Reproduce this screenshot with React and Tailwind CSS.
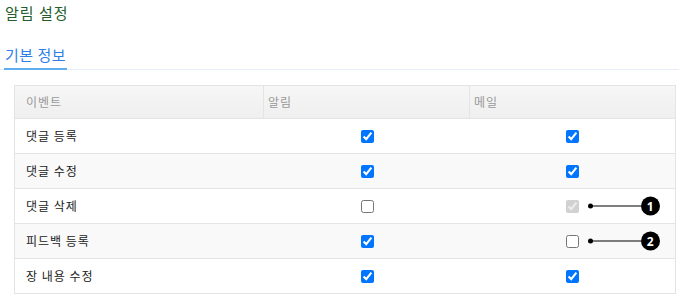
const rows = [
  { name: "댓글 등록", alarm: true, mail: true },
  { name: "댓글 수정", alarm: true, mail: true },
  { name: "댓글 삭제", alarm: false, mail: true, disabled: true, mark: 1 },
  { name: "피드백 등록", alarm: true, mail: false, mark: 2 },
  { name: "장 내용 수정", alarm: true, mail: true },
];

const Callout = ({ n }) => (
  <div className="absolute left-[calc(50%+16px)] top-1/2 -translate-y-1/2 flex items-center">
    <span className="w-[5px] h-[5px] rounded-full bg-black" />
    <span className="w-[49px] h-px bg-black -ml-px" />
    <span className="w-[19px] h-[19px] rounded-full bg-black text-white text-[12px] font-bold leading-none flex items-center justify-center font-['Noto_Sans',sans-serif]">
      {n}
    </span>
  </div>
);

export default function App() {
  return (
    <div className="w-[679px] h-[295px] bg-white font-['Noto_Sans_CJK_KR','Noto_Sans',sans-serif] overflow-hidden">
      <h1 className="pl-[5px] pt-[2px] text-[15px] leading-[22px] tracking-[1px] text-[#245c2c]">알림 설정</h1>

      <div className="mt-[21px] flex border-b border-[#e4eef8]">
        <div className="ml-[4px] px-[1px] pb-[3px] -mb-px border-b-2 border-[#5eaef0] text-[15px] leading-[20px] tracking-[0.5px] text-[#2e7fe6]">
          기본 정보
        </div>
      </div>

      <table className="mt-[15px] ml-[14px] w-[661px] border-collapse table-fixed text-[12px] tracking-[1px]">
        <colgroup>
          <col className="w-[249px]" />
          <col className="w-[206px]" />
          <col className="w-[206px]" />
        </colgroup>
        <thead>
          <tr className="h-[33px] bg-gradient-to-b from-[#f6f6f6] to-[#efefef] text-[#999999]">
            <th className="border border-[#e4e4e4] text-left font-normal pl-[11px]">이벤트</th>
            <th className="border border-[#e4e4e4] text-left font-normal pl-[4px]">알림</th>
            <th className="border border-[#e4e4e4] text-left font-normal pl-[4px]">메일</th>
          </tr>
        </thead>
        <tbody>
          {rows.map((r, i) => (
            <tr key={r.name} className={`h-[35px] ${i % 2 ? "bg-[#f9f9f9]" : "bg-white"} text-[#222222]`}>
              <td className="border-y border-l border-[#e4e4e4] pl-[11px]">{r.name}</td>
              <td className="border-y border-[#e4e4e4]">
                <div className="flex justify-center pl-[1px]">
                  <input type="checkbox" readOnly checked={r.alarm} className="w-[13px] h-[13px]" />
                </div>
              </td>
              <td className="border-y border-r border-[#e4e4e4]">
                <div className="relative flex justify-center pl-[1px]">
                  <input
                    type="checkbox"
                    readOnly
                    checked={r.mail}
                    disabled={r.disabled}
                    className="w-[13px] h-[13px]"
                  />
                  {r.mark && <Callout n={r.mark} />}
                </div>
              </td>
            </tr>
          ))}
        </tbody>
      </table>
    </div>
  );
}
